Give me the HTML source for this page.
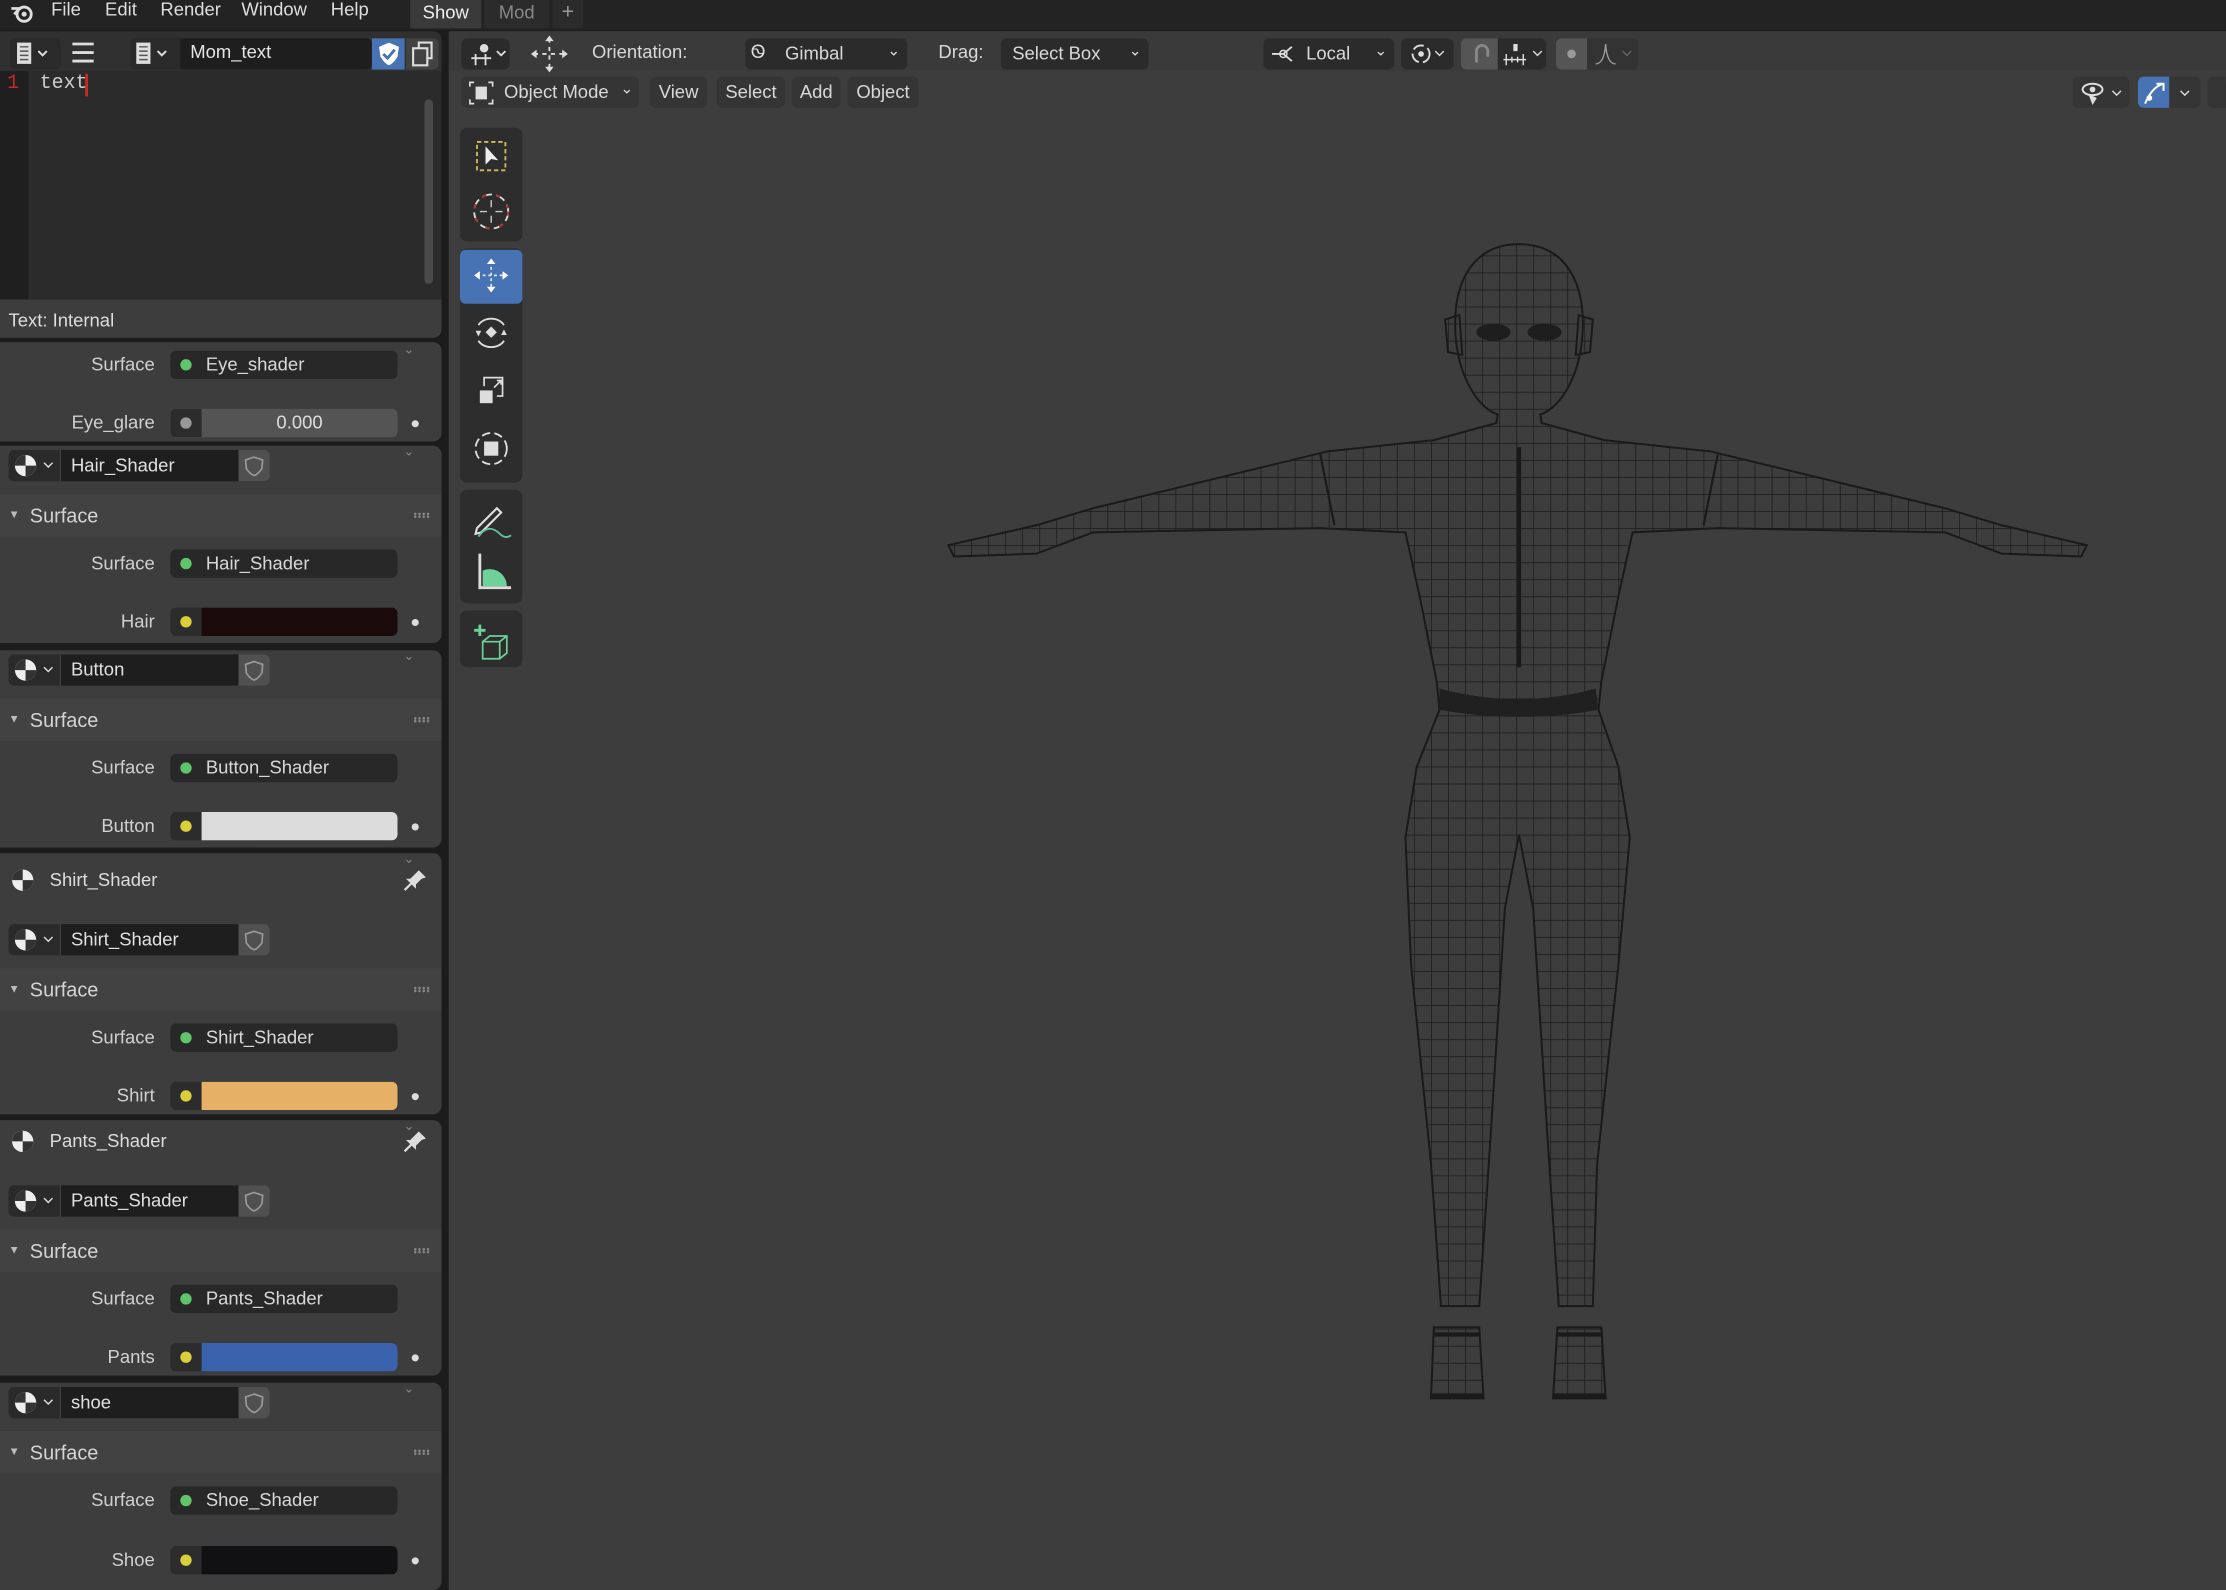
<!DOCTYPE html>
<html><head><meta charset="utf-8"><style>
*{margin:0;padding:0;box-sizing:border-box}
html,body{width:2226px;height:1590px;overflow:hidden;background:#1c1c1c}
#w{position:absolute;left:0;top:0;width:1568px;height:1120px;transform:scale(1.41964);transform-origin:0 0;font-family:"Liberation Sans",sans-serif;font-size:13px;color:#d8d8d8;background:#1c1c1c}
.a{position:absolute}
.lbl{position:absolute;width:109px;left:0;text-align:right;color:#d0d0d0}
.fld{position:absolute;left:120px;width:160px;height:20px;background:#282828;border-radius:4px;padding-left:25px;line-height:20px;color:#d8d8d8}
.fld:before{content:"";position:absolute;left:7px;top:6px;width:8px;height:8px;border-radius:50%;background:#5fc46a}
.col{position:absolute;left:120px;width:160px;height:20px;border-radius:4px;overflow:hidden;background:#2c2c2c}
.col i{position:absolute;left:7px;top:6px;width:8px;height:8px;border-radius:50%;background:#d8cf3a}
.col b{position:absolute;left:22px;right:0;top:0;bottom:0;border-radius:0 4px 4px 0}
.sdot{position:absolute;left:290px;width:5px;height:5px;border-radius:50%;background:#ddd}
.panel{position:absolute;left:0;width:311px;background:#3d3d3d;border-radius:0 6px 6px 0}
.sel{position:absolute;left:6px;width:184px;height:22px}
.sel .ic{position:absolute;left:0;top:0;width:36px;height:22px;background:#2a2a2a;border-radius:4px 0 0 4px}
.sel .nm{position:absolute;left:37px;top:0;width:125px;height:22px;background:#1e1e1e;line-height:22px;padding-left:7px;color:#e0e0e0}
.sel .sh{position:absolute;left:162px;top:0;width:22px;height:22px;background:#505050;border-radius:0 4px 4px 0}
.hdr{position:absolute;left:0;width:311px;height:30px;background:#424242;line-height:30px;font-size:14px;color:#d4d4d4;padding-left:21px}
.hdr:before{content:"▼";position:absolute;left:6px;font-size:8px;color:#bbb}
.hdr:after{content:"";position:absolute;right:8px;top:13px;width:12px;height:4px;background-image:radial-gradient(circle,#888 0.8px,transparent 1px);background-size:3px 2px}
.chev{position:absolute;left:280px;width:16px;height:9px;font-size:9px;color:#888;text-align:center}
.tb{position:absolute;left:324px;width:44px;background:#2d2d2d;border-radius:5px}
.hbtn{position:absolute;top:27px;height:22px;background:#2b2b2b;border-radius:4px;line-height:22px;color:#d8d8d8;padding-left:8px}
.mbtn{position:absolute;top:54px;height:22px;background:#353535;border-radius:4px;line-height:22px;color:#d8d8d8;text-align:center}
</style></head><body><div id="w">

<div class="a" style="left:0;top:0;width:1568px;height:21px;background:#232323"></div>
<svg class="a" style="left:6px;top:1px" width="20" height="16" viewBox="0 0 20 16"><circle cx="11" cy="9" r="5" fill="none" stroke="#ddd" stroke-width="2"/><circle cx="11" cy="9" r="1.8" fill="#ddd"/><path d="M2 5 L9 5 M4 9 L7 6" stroke="#ddd" stroke-width="2"/></svg>
<div class="a" style="left:36px;top:-1px;color:#ddd">File</div>
<div class="a" style="left:74px;top:-1px;color:#ddd">Edit</div>
<div class="a" style="left:113px;top:-1px;color:#ddd">Render</div>
<div class="a" style="left:170px;top:-1px;color:#ddd">Window</div>
<div class="a" style="left:233px;top:-1px;color:#ddd">Help</div>
<div class="a" style="left:289px;top:0;width:50px;height:20px;background:#3a3a3a;color:#eee;text-align:center;line-height:17px">Show</div>
<div class="a" style="left:341px;top:0;width:46px;height:20px;background:#2b2b2b;color:#888;text-align:center;line-height:17px">Mod</div>
<div class="a" style="left:389px;top:0;width:22px;height:20px;background:#2b2b2b;color:#999;text-align:center;line-height:17px;font-size:15px">+</div>

<div class="a" style="left:0;top:22px;width:311px;height:28px;background:#303030;border-radius:0 6px 0 0"></div>
<div class="a" style="left:7px;top:27px;width:36px;height:22px;background:#2a2a2a;border-radius:4px"></div>
<svg class="a" style="left:10px;top:29px" width="30" height="18"><rect x="2" y="1" width="10" height="15" fill="#ddd"/><path d="M4 4h6M4 7h6M4 10h6M4 13h6" stroke="#555"/><path d="M17 7l3 3 3-3" stroke="#ddd" fill="none" stroke-width="1.4"/></svg>
<svg class="a" style="left:50px;top:29px" width="18" height="16"><path d="M1 2h15M1 8h15M1 14h15" stroke="#ddd" stroke-width="2"/></svg>
<div class="a" style="left:92px;top:27px;width:170px;height:22px;background:#1e1e1e;border-radius:4px"></div>
<div class="a" style="left:92px;top:27px;width:35px;height:22px;background:#2a2a2a;border-radius:4px 0 0 4px"></div>
<svg class="a" style="left:94px;top:29px" width="30" height="18"><rect x="2" y="1" width="10" height="15" fill="#ddd"/><path d="M4 4h6M4 7h6M4 10h6M4 13h6" stroke="#555"/><path d="M17 7l3 3 3-3" stroke="#ddd" fill="none" stroke-width="1.4"/></svg>
<div class="a" style="left:134px;top:29px;color:#e4e4e4">Mom_text</div>
<div class="a" style="left:262px;top:27px;width:23px;height:22px;background:#4772b3"></div>
<svg class="a" style="left:264px;top:28px" width="20" height="20"><path d="M10 2 L17 5 L16 12 Q13 17 10 18 Q7 17 4 12 L3 5 Z" fill="#fff"/><path d="M6 10l3 3 5-6" stroke="#4772b3" stroke-width="2" fill="none"/></svg>
<div class="a" style="left:286px;top:27px;width:23px;height:22px;background:#424242;border-radius:0 4px 4px 0"></div>
<svg class="a" style="left:288px;top:28px" width="20" height="20"><rect x="3" y="6" width="10" height="12" fill="none" stroke="#ddd" stroke-width="1.5"/><path d="M7 6V2h9v11h-3" fill="none" stroke="#ddd" stroke-width="1.5"/></svg>
<div class="a" style="left:0;top:50px;width:311px;height:161px;background:#2b2b2b"></div>
<div class="a" style="left:0;top:50px;width:20px;height:161px;background:#1f1f1f"></div>
<div class="a" style="left:5px;top:51px;color:#c42a2a;font-family:'Liberation Mono',monospace;font-size:14px">1</div>
<div class="a" style="left:28px;top:51px;color:#ccc;font-family:'Liberation Mono',monospace;font-size:14px">text</div>
<div class="a" style="left:60px;top:52px;width:2px;height:16px;background:#c42a2a"></div>
<div class="a" style="left:299px;top:70px;width:6px;height:130px;background:#4a4a4a;border-radius:3px"></div>
<div class="a" style="left:0;top:211px;width:311px;height:27px;background:#3d3d3d;border-radius:0 0 6px 0"></div>
<div class="a" style="left:6px;top:218px;color:#ddd">Text: Internal</div>

<div class="panel" style="top:241px;height:70px"></div>
<div class="chev" style="top:241px">⌄</div>
<div class="lbl" style="top:249px">Surface</div><div class="fld" style="top:247px">Eye_shader</div>
<div class="lbl" style="top:290px">Eye_glare</div>
<div class="a" style="left:120px;top:288px;width:160px;height:20px;background:#545454;border-radius:4px;overflow:hidden"><div class="a" style="left:0;top:0;width:22px;height:20px;background:#2c2c2c"></div><div class="a" style="left:7px;top:6px;width:8px;height:8px;border-radius:50%;background:#999"></div><div class="a" style="left:22px;right:0;top:2px;text-align:center;color:#ddd">0.000</div></div>
<div class="sdot" style="top:296px"></div>

<div class="panel" style="top:314px;height:139px"></div>
<div class="chev" style="top:313px">⌄</div>
<div class="sel" style="top:317px"><div class="ic"></div><div class="nm">Hair_Shader</div><div class="sh"></div></div>
<div class="hdr" style="top:348px">Surface</div>
<div class="lbl" style="top:389px">Surface</div><div class="fld" style="top:387px">Hair_Shader</div>
<div class="lbl" style="top:430px">Hair</div><div class="col" style="top:428px"><i></i><b style="background:#1b0a0a"></b></div><div class="sdot" style="top:436px"></div>

<div class="panel" style="top:458px;height:139px"></div>
<div class="chev" style="top:457px">⌄</div>
<div class="sel" style="top:461px"><div class="ic"></div><div class="nm">Button</div><div class="sh"></div></div>
<div class="hdr" style="top:492px">Surface</div>
<div class="lbl" style="top:533px">Surface</div><div class="fld" style="top:531px">Button_Shader</div>
<div class="lbl" style="top:574px">Button</div><div class="col" style="top:572px"><i></i><b style="background:#dcdcdc"></b></div><div class="sdot" style="top:580px"></div>

<div class="panel" style="top:601px;height:184px"></div>
<div class="chev" style="top:600px">⌄</div>
<div class="a" style="left:35px;top:612px;color:#ddd">Shirt_Shader</div>
<div class="sel" style="top:651px"><div class="ic"></div><div class="nm">Shirt_Shader</div><div class="sh"></div></div>
<div class="hdr" style="top:682px">Surface</div>
<div class="lbl" style="top:723px">Surface</div><div class="fld" style="top:721px">Shirt_Shader</div>
<div class="lbl" style="top:764px">Shirt</div><div class="col" style="top:762px"><i></i><b style="background:#e6b066"></b></div><div class="sdot" style="top:770px"></div>

<div class="panel" style="top:789px;height:180px"></div>
<div class="chev" style="top:788px">⌄</div>
<div class="a" style="left:35px;top:796px;color:#ddd">Pants_Shader</div>
<div class="sel" style="top:835px"><div class="ic"></div><div class="nm">Pants_Shader</div><div class="sh"></div></div>
<div class="hdr" style="top:866px">Surface</div>
<div class="lbl" style="top:907px">Surface</div><div class="fld" style="top:905px">Pants_Shader</div>
<div class="lbl" style="top:948px">Pants</div><div class="col" style="top:946px"><i></i><b style="background:#3b62ad"></b></div><div class="sdot" style="top:954px"></div>

<div class="panel" style="top:974px;height:146px"></div>
<div class="chev" style="top:973px">⌄</div>
<div class="sel" style="top:977px"><div class="ic"></div><div class="nm">shoe</div><div class="sh"></div></div>
<div class="hdr" style="top:1008px">Surface</div>
<div class="lbl" style="top:1049px">Surface</div><div class="fld" style="top:1047px">Shoe_Shader</div>
<div class="lbl" style="top:1091px">Shoe</div><div class="col" style="top:1089px"><i></i><b style="background:#111114"></b></div><div class="sdot" style="top:1097px"></div>

<svg class="a" style="left:0;top:0" width="312" height="1120">
<defs><g id="mb"><circle r="7.5" fill="#eee"/><path d="M0 -7.5 A7.5 7.5 0 0 0 -7.5 0 L0 0Z M0 0 L7.5 0 A7.5 7.5 0 0 1 0 7.5Z" fill="#333"/></g>
<g id="sh"><path d="M0 -6 L6 -4 L5.5 2 Q3 6 0 7 Q-3 6 -5.5 2 L-6 -4Z" fill="none" stroke="#999" stroke-width="1.2"/></g>
<g id="pin"><path d="M3 -7 L8 -2 L5 -1 L1 3 L1 6 L-6 -1 L-3 -1 L1 -5Z" fill="#ddd"/><path d="M-2 2 L-7 7" stroke="#ddd" stroke-width="1.6"/></g></defs>
<use href="#mb" x="18" y="328"/><path d="M31 326l3 3 3-3" stroke="#ddd" fill="none"/><use href="#sh" x="179" y="328"/>
<use href="#mb" x="18" y="472"/><path d="M31 470l3 3 3-3" stroke="#ddd" fill="none"/><use href="#sh" x="179" y="472"/>
<use href="#mb" x="16" y="620"/><use href="#pin" x="292" y="620"/>
<use href="#mb" x="18" y="662"/><path d="M31 660l3 3 3-3" stroke="#ddd" fill="none"/><use href="#sh" x="179" y="662"/>
<use href="#mb" x="16" y="804"/><use href="#pin" x="292" y="804"/>
<use href="#mb" x="18" y="846"/><path d="M31 844l3 3 3-3" stroke="#ddd" fill="none"/><use href="#sh" x="179" y="846"/>
<use href="#mb" x="18" y="988"/><path d="M31 986l3 3 3-3" stroke="#ddd" fill="none"/><use href="#sh" x="179" y="988"/>
</svg>

<div class="a" style="left:316px;top:22px;width:1252px;height:1098px;background:#3d3d3d;border-radius:6px 0 0 0"></div>
<div class="a" style="left:316px;top:22px;width:1252px;height:28px;background:#3a3a3a"></div>
<div class="hbtn" style="left:325px;width:34px"></div>
<svg class="a" style="left:330px;top:29px" width="30" height="18"><circle cx="11" cy="5" r="3" fill="#ddd"/><path d="M2 12h14M5 9v8M12 9v8" stroke="#ddd" stroke-width="1.3"/><path d="M20 7l3 3 3-3" stroke="#ddd" fill="none" stroke-width="1.3"/></svg>
<svg class="a" style="left:372px;top:24px" width="30" height="28"><path d="M15 3v22M4 14h22" stroke="#ddd" stroke-width="1.3" stroke-dasharray="3 3"/><path d="M15 1l-3 4h6zM15 27l-3-4h6zM2 14l4-3v6zM28 14l-4-3v6z" fill="#ddd"/></svg>
<div class="a" style="left:417px;top:29px">Orientation:</div>
<div class="hbtn" style="left:525px;width:114px;padding-left:28px">Gimbal</div>
<div class="a" style="left:529px;top:29px;color:#ddd">Ꮻ</div>
<div class="a" style="left:625px;top:29px;color:#ddd;font-size:11px">⌄</div>
<div class="a" style="left:661px;top:29px">Drag:</div>
<div class="hbtn" style="left:705px;width:104px">Select Box</div>
<div class="a" style="left:795px;top:29px;color:#ddd;font-size:11px">⌄</div>
<div class="hbtn" style="left:890px;width:92px;padding-left:30px">Local</div>
<svg class="a" style="left:894px;top:29px" width="22" height="18"><path d="M2 9h8M10 9l6-5M10 9l6 5" stroke="#ddd" stroke-width="1.3" fill="none"/><circle cx="10" cy="9" r="2.5" fill="none" stroke="#ddd"/></svg>
<div class="a" style="left:968px;top:29px;font-size:11px">⌄</div>
<div class="hbtn" style="left:987px;width:37px"></div>
<svg class="a" style="left:992px;top:29px" width="30" height="18"><circle cx="9" cy="9" r="6" fill="none" stroke="#ddd" stroke-width="1.3" stroke-dasharray="8 3"/><circle cx="9" cy="9" r="2" fill="#ddd"/><path d="M19 7l3 3 3-3" stroke="#ddd" fill="none"/></svg>
<div class="hbtn" style="left:1029px;width:60px;background:#2b2b2b"></div>
<div class="a" style="left:1029px;top:27px;width:26px;height:22px;background:#555;border-radius:4px 0 0 4px"></div>
<svg class="a" style="left:1031px;top:28px" width="58" height="20"><path d="M9 16 V8 a4 4 0 0 1 8 0 V12" stroke="#888" stroke-width="2" fill="none"/><path d="M28 14h16M30 10v8M34 12v4M38 12v4M42 10v8" stroke="#ddd"/><rect x="35" y="3" width="3" height="5" fill="#ddd"/><path d="M49 8l3 3 3-3" stroke="#ddd" fill="none"/></svg>
<div class="hbtn" style="left:1096px;width:58px;background:#333"></div>
<div class="a" style="left:1096px;top:27px;width:22px;height:22px;background:#555;border-radius:4px 0 0 4px"></div>
<div class="a" style="left:1104px;top:35px;width:6px;height:6px;border-radius:50%;background:#999"></div>
<svg class="a" style="left:1122px;top:28px" width="30" height="20"><path d="M2 17 Q8 17 9 3 Q10 17 16 17" stroke="#999" fill="none"/><path d="M21 8l3 3 3-3" stroke="#666" fill="none"/></svg>

<div class="mbtn" style="left:325px;width:125px;text-align:left;padding-left:30px">Object Mode</div>
<svg class="a" style="left:330px;top:57px" width="18" height="17"><path d="M1 4V1h3M14 1h3v3M17 13v3h-3M4 16H1v-3" stroke="#ddd" fill="none" stroke-width="1.2"/><rect x="5" y="4" width="8" height="9" fill="#ddd"/></svg>
<div class="a" style="left:437px;top:56px;font-size:11px">⌄</div>
<div class="mbtn" style="left:458px;width:40px">View</div>
<div class="mbtn" style="left:505px;width:48px">Select</div>
<div class="mbtn" style="left:558px;width:34px">Add</div>
<div class="mbtn" style="left:597px;width:50px">Object</div>

<div class="mbtn" style="left:1460px;width:40px"></div>
<svg class="a" style="left:1464px;top:56px" width="34" height="20"><ellipse cx="10" cy="7" rx="7" ry="4" fill="none" stroke="#ddd" stroke-width="1.4"/><circle cx="10" cy="7" r="2" fill="#ddd"/><path d="M7 10 L10 18 L13 13Z" fill="#ddd"/><path d="M24 8l3 3 3-3" stroke="#ddd" fill="none"/></svg>
<div class="mbtn" style="left:1506px;width:44px"></div>
<div class="a" style="left:1506px;top:54px;width:22px;height:22px;background:#4772b3;border-radius:4px 0 0 4px"></div>
<svg class="a" style="left:1508px;top:56px" width="40" height="20"><path d="M3 17 Q8 5 16 3M11 3h5v5" stroke="#fff" fill="none" stroke-width="1.4"/><circle cx="6" cy="13" r="2" fill="#fff"/><path d="M28 8l3 3 3-3" stroke="#ddd" fill="none"/></svg>
<div class="a" style="left:1555px;top:54px;width:13px;height:22px;background:#353535;border-radius:4px 0 0 4px"></div>

<div class="tb" style="top:90px;height:80px"></div>
<div class="tb" style="top:175px;height:165px"></div>
<div class="a" style="left:324px;top:176px;width:44px;height:38px;background:#4772b3;border-radius:4px"></div>
<div class="tb" style="top:345px;height:80px"></div>
<div class="tb" style="top:430px;height:40px"></div>
<svg class="a" style="left:324px;top:88px" width="46" height="390">
<rect x="12" y="12" width="20" height="20" fill="none" stroke="#d2b85c" stroke-width="1.3" stroke-dasharray="3 2"/><path d="M18 15 L18 28 L22 24 L27 25Z" fill="#eee"/>
<circle cx="22" cy="61" r="12" fill="none" stroke="#ddd" stroke-width="1.3" stroke-dasharray="7 3"/><circle cx="22" cy="61" r="12" fill="none" stroke="#a33" stroke-width="1.3" stroke-dasharray="3 7"/><path d="M22 53v5M22 64v5M14 61h5M25 61h5" stroke="#ccc"/>
<path d="M22 96v20M12 106h20" stroke="#dfe8f5" stroke-width="1.2" stroke-dasharray="2 2"/><path d="M22 94l-3 4h6zM22 118l-3-4h6zM10 106l4-3v6zM34 106l-4-3v6z" fill="#fff"/>
<path d="M13 141 A10 8 0 0 1 31 141 M31 152 A10 8 0 0 1 13 152" fill="none" stroke="#ddd" stroke-width="1.3"/><path d="M22 142l4 4-4 4-4-4z" fill="#ddd"/><path d="M11 145l4 0-2 4zM33 148l-4 0 2-4z" fill="#ddd"/>
<rect x="14" y="187" width="9" height="9" fill="#ddd"/><path d="M17 184v-6h13v13h-4M24 185l5-5M26 180h3v3" stroke="#ddd" fill="none" stroke-width="1.2"/>
<circle cx="22" cy="228" r="11" fill="none" stroke="#ddd" stroke-width="1.3" stroke-dasharray="6 3"/><rect x="17" y="223" width="10" height="10" fill="#ddd"/>
<path d="M12 284 L26 270 L29 273 L15 287 L11 288Z" fill="none" stroke="#ddd" stroke-width="1.5"/><path d="M13 290 Q20 280 28 288 Q32 292 36 289" stroke="#5fc4a0" fill="none" stroke-width="1.3"/>
<path d="M14 302v24h22" stroke="#ddd" stroke-width="2" fill="none"/><path d="M16 314 A12 12 0 0 1 33 325 L16 325Z" fill="#6fd19a"/>
<path d="M14 360v-8M10 356h8" stroke="#6fd19a" stroke-width="2"/><path d="M16 364h12v12H16zM16 364l5-4h12v12l-5 4M28 364l5-4" stroke="#6fd19a" fill="none" stroke-width="1.2"/>
</svg>

<svg class="a" style="left:0;top:0" width="1568" height="1120">
<defs>
<pattern id="g" width="12" height="12" patternUnits="userSpaceOnUse"><path d="M0 0H12M0 0V12" stroke="#1a1a1a" stroke-width="1" fill="none"/></pattern>
<clipPath id="c"><path id="sil" d="M1070,172 C1100,172 1115,195 1115,228 C1115,262 1100,287 1085,292 L1086,298 L1130,310 L1205,318 L1370,358 L1410,370 L1470,384 L1466,392 L1410,390 L1370,375 L1210,372 L1150,375 L1140,420 L1128,480 L1126,500 L1140,540 L1148,590 L1140,680 L1125,820 L1122,920 L1098,920 L1090,800 L1080,640 L1070,588 L1060,640 L1050,800 L1042,920 L1015,920 L1008,820 L994,680 L990,590 L998,540 L1014,500 L1012,480 L1000,420 L990,375 L930,372 L770,375 L730,390 L672,392 L668,384 L730,370 L770,358 L935,318 L1010,310 L1054,298 L1055,292 C1040,287 1025,262 1025,228 C1025,195 1040,172 1070,172 Z M1010,935 L1042,935 L1045,985 L1008,985Z M1097,935 L1128,935 L1131,985 L1094,985Z M1018,225 L1028,222 L1030,250 L1020,248Z M1122,225 L1112,222 L1110,250 L1120,248Z"/></clipPath>
</defs>
<g clip-path="url(#c)"><rect x="660" y="165" width="820" height="830" fill="url(#g)"/></g>
<use href="#sil" fill="none" stroke="#1a1a1a" stroke-width="1.4"/>
<path d="M1014,485 Q1070,500 1124,485 L1126,500 Q1070,510 1014,500Z" fill="#202020"/>
<path d="M1070,315 V470" stroke="#1a1a1a" stroke-width="3"/>
<ellipse cx="1052" cy="234" rx="12" ry="6" fill="#1e1e1e"/><ellipse cx="1088" cy="234" rx="12" ry="6" fill="#1e1e1e"/>
<path d="M930,320 L940,370 M1210,320 L1200,370" stroke="#1a1a1a" stroke-width="1.5"/>
<path d="M1010,940 h32 M1097,940 h32 M1008,983 h37 M1094,983 h37" stroke="#1a1a1a" stroke-width="3"/>
</svg>

<div class="a" style="left:311px;top:22px;width:5px;height:1098px;background:#1c1c1c"></div>
</div></body></html>
